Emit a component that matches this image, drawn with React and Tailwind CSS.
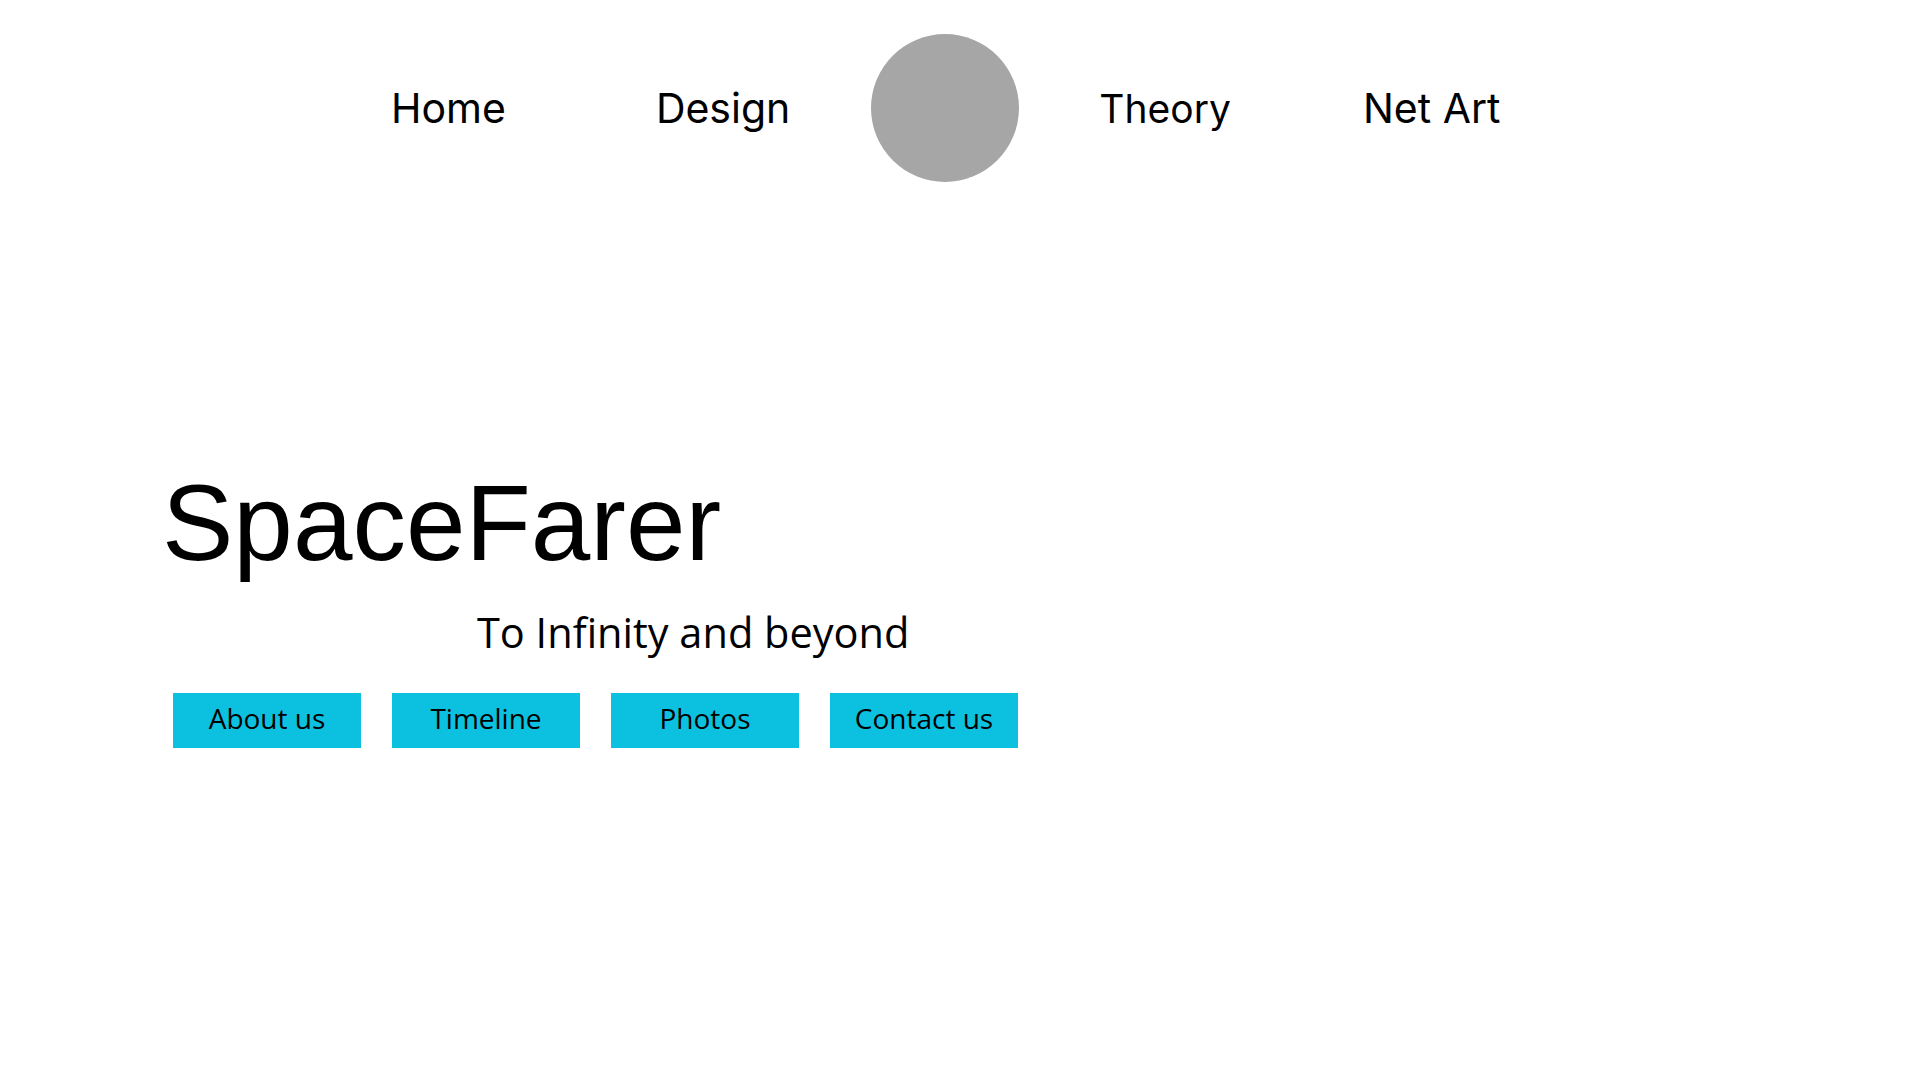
import React from 'react';

export default function App() {
  const buttons = ['About us', 'Timeline', 'Photos', 'Contact us'];

  return (
    <div className="w-[1920px] h-[1080px] bg-white text-black overflow-hidden">
      {/* NAV */}
      <nav className="flex items-center h-[148px] mt-[34px] pl-[391px] text-[41px] leading-none font-[Inter,sans-serif]">
        <a className="block">Home</a>
        <a className="block ml-[150px]">Design</a>
        <div className="ml-[81px] w-[148px] h-[148px] rounded-full bg-[#a6a6a6]" />
        <a className="block ml-[80px] text-[39px]">Theory</a>
        <a className="block ml-[132px]">Net Art</a>
      </nav>

      {/* HERO */}
      <div className="pl-[162px]">
        <h1 className="mt-[288px] text-[107px] leading-none font-normal font-['Liberation_Sans',Arial,sans-serif]">
          SpaceFarer
        </h1>
        <p className="mt-[35px] ml-[315px] text-[41.5px] leading-none font-['Open_Sans','Noto_Sans',sans-serif]">
          To Infinity and beyond
        </p>
        <div className="flex gap-[31px] mt-[39px] ml-[11px]">
          {buttons.map(b => (
            <button
              key={b}
              className="w-[188px] h-[55px] pb-[4px] bg-[#0cc0df] flex items-center justify-center text-[28px] leading-none font-['Open_Sans','Noto_Sans',sans-serif]"
            >
              {b}
            </button>
          ))}
        </div>
      </div>
    </div>
  );
}
